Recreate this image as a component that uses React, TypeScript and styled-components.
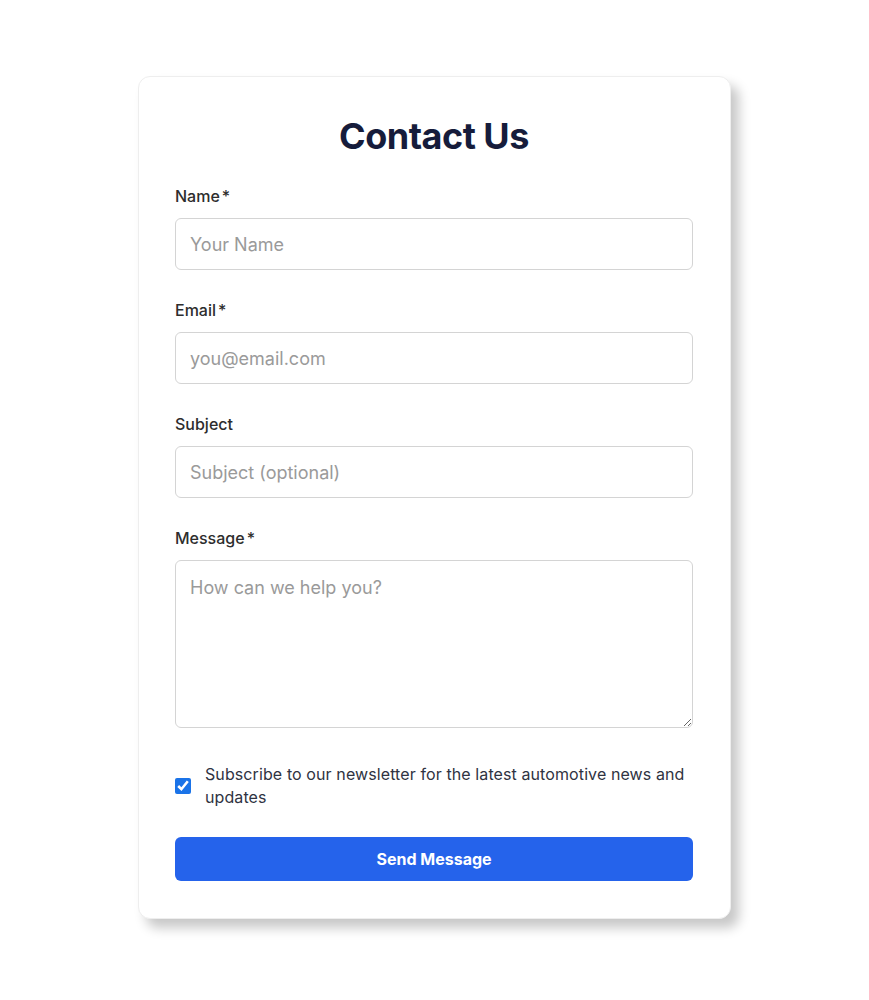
import styled, { createGlobalStyle } from 'styled-components';

const GlobalStyle = createGlobalStyle`
  * {
    box-sizing: border-box;
  }
  body {
    margin: 0;
    background: #ffffff;
    font-family: Inter, "Liberation Sans", sans-serif;
  }
`;

const Page = styled.div`
  display: flex;
  justify-content: center;
  padding: 76px 0 40px 0;
`;

const Card = styled.form`
  width: 593px;
  background: #ffffff;
  border-radius: 12px;
  border: 1px solid #eeeeee;
  box-shadow: 8px 9px 12px rgba(0, 0, 0, 0.22);
  padding: 37px 37px 37px 36px;
  display: flex;
  flex-direction: column;
`;

const Title = styled.h1`
  margin: 0 0 27px 0;
  text-align: center;
  font-size: 36px;
  line-height: 44px;
  font-weight: 700;
  color: #161c3b;
  letter-spacing: -0.5px;
`;

const Field = styled.div`
  display: flex;
  flex-direction: column;
  gap: 11px;
  margin-bottom: 29px;
`;

const Label = styled.label`
  font-size: 16px;
  line-height: 22px;
  font-weight: 500;
  color: #2d2d2d;
`;

const Star = styled.span`
  margin-left: 2px;
`;

const fieldCss = `
  width: 100%;
  border: 1px solid #d4d4d4;
  border-radius: 6px;
  background: #fff;
  font-family: Inter, "Liberation Sans", sans-serif;
  font-size: 18px;
  color: #222;
  padding: 0 14px;
  outline: none;
  &::placeholder {
    color: #9a9a9a;
  }
`;

const Input = styled.input`
  ${fieldCss}
  height: 52px;
`;

const TextArea = styled.textarea`
  ${fieldCss}
  height: 168px;
  padding-top: 15px;
  line-height: 24px;
  resize: vertical;
  display: block;
`;

const CheckRow = styled.div`
  display: flex;
  align-items: center;
  gap: 14px;
  margin-top: 6px;
  margin-bottom: 28px;
`;

const Check = styled.input`
  width: 16px;
  height: 16px;
  margin: 0;
  flex-shrink: 0;
  accent-color: #1a73e8;
`;

const CheckText = styled.label`
  font-size: 16px;
  line-height: 23px;
  letter-spacing: 0.1px;
  color: #2f3342;
`;

const Button = styled.button`
  height: 44px;
  border: none;
  border-radius: 6px;
  background: #2563eb;
  color: #ffffff;
  font-family: Inter, "Liberation Sans", sans-serif;
  font-size: 16px;
  font-weight: 700;
  cursor: pointer;
`;

const App = () => {
  return (
    <>
      <GlobalStyle />
      <Page>
        <Card onSubmit={(e) => e.preventDefault()}>
          <Title>Contact Us</Title>

          <Field>
            <Label htmlFor="name">Name<Star>*</Star></Label>
            <Input id="name" type="text" placeholder="Your Name" />
          </Field>

          <Field>
            <Label htmlFor="email">Email<Star>*</Star></Label>
            <Input id="email" type="email" placeholder="you@email.com" />
          </Field>

          <Field>
            <Label htmlFor="subject">Subject</Label>
            <Input id="subject" type="text" placeholder="Subject (optional)" />
          </Field>

          <Field>
            <Label htmlFor="message">Message<Star>*</Star></Label>
            <TextArea id="message" placeholder="How can we help you?" />
          </Field>

          <CheckRow>
            <Check type="checkbox" id="newsletter" defaultChecked />
            <CheckText htmlFor="newsletter">
              Subscribe to our newsletter for the latest automotive news and updates
            </CheckText>
          </CheckRow>

          <Button type="submit">Send Message</Button>
        </Card>
      </Page>
    </>
  );
};

export default App;
